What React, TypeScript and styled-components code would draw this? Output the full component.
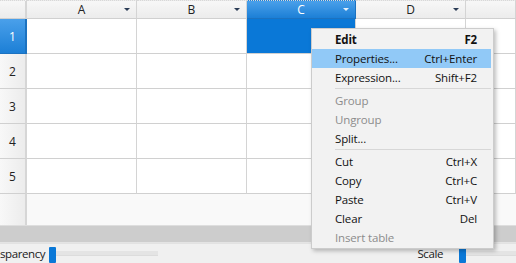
import { createGlobalStyle, styled } from 'styled-components';

const GlobalStyle = createGlobalStyle`
  html, body {
    margin: 0;
    padding: 0;
    width: 516px;
    height: 263px;
    overflow: hidden;
    background: #ffffff;
  }
  body {
    font-family: 'Open Sans', 'Noto Sans', 'DejaVu Sans', sans-serif;
    font-size: 12px;
    color: #1a1a1a;
  }
`;

const columns = ['A', 'B', 'C', 'D', ''];
const rows = [1, 2, 3, 4, 5];
const selectedCol = 'C';
const selectedRow = 1;

type MenuEntry =
  | { kind: 'item'; label: string; shortcut?: string; bold?: boolean; active?: boolean; disabled?: boolean }
  | { kind: 'sep' };

const menu: MenuEntry[] = [
  { kind: 'item', label: 'Edit', shortcut: 'F2', bold: true },
  { kind: 'item', label: 'Properties...', shortcut: 'Ctrl+Enter', active: true },
  { kind: 'item', label: 'Expression...', shortcut: 'Shift+F2' },
  { kind: 'sep' },
  { kind: 'item', label: 'Group', disabled: true },
  { kind: 'item', label: 'Ungroup', disabled: true },
  { kind: 'item', label: 'Split...' },
  { kind: 'sep' },
  { kind: 'item', label: 'Cut', shortcut: 'Ctrl+X' },
  { kind: 'item', label: 'Copy', shortcut: 'Ctrl+C' },
  { kind: 'item', label: 'Paste', shortcut: 'Ctrl+V' },
  { kind: 'item', label: 'Clear', shortcut: 'Del' },
  { kind: 'item', label: 'Insert table', disabled: true },
];

export default function App(): JSX.Element {
  return (
    <>
      <GlobalStyle />
      <Window>
        <SheetArea>
          <Grid>
            <Corner />
            {columns.map((c, i) => (
              <ColHeader key={`h${i}`} $selected={c === selectedCol}>
                <span>{c}</span>
                {i < 4 ? <Caret $selected={c === selectedCol} /> : null}
              </ColHeader>
            ))}
            {rows.map((r) => (
              <RowGroup key={r}>
                <RowHeader $selected={r === selectedRow}>{r}</RowHeader>
                {columns.map((c, i) => (
                  <Cell key={`${r}-${i}`} $selected={r === selectedRow && c === selectedCol} />
                ))}
              </RowGroup>
            ))}
          </Grid>
          <Filler>
            <FillerHeader />
          </Filler>
        </SheetArea>
        <ScrollBand />
        <StatusBar>
          {/* the window is cut at the left, only the tail of "Transparency" shows */}
          <StatusLabel $gap={4}>sparency</StatusLabel>
          <Thumb />
          <Track $width={102} />
          <Spacer />
          <StatusLabel $gap={16}>Scale</StatusLabel>
          <Thumb />
          <Track $width={50} />
        </StatusBar>

        <Menu>
          {menu.map((m, i) =>
            m.kind === 'sep' ? (
              <Separator key={i} />
            ) : (
              <MenuItem key={i} $active={m.active} $disabled={m.disabled} $bold={m.bold}>
                <span>{m.label}</span>
                {m.shortcut ? <span>{m.shortcut}</span> : null}
              </MenuItem>
            ),
          )}
        </Menu>
      </Window>
    </>
  );
}

const Window = styled.div`
  position: relative;
  width: 516px;
  height: 263px;
  display: flex;
  flex-direction: column;
  overflow: hidden;
`;

const SheetArea = styled.div`
  flex: 1;
  display: flex;
  flex-direction: column;
  background: #f9f9f9;
`;

const Grid = styled.div`
  display: grid;
  grid-template-columns: 27px 110px 110px 109px 110px 1fr;
  grid-template-rows: 19px repeat(5, 35px);
  background: #ffffff;
`;

const RowGroup = styled.div`
  display: contents;
`;

const headerBg = 'linear-gradient(#f7f7f7, #ececec)';
const selectedBg = 'linear-gradient(#4aa0ea, #1c7fd6)';

const Corner = styled.div`
  background: ${headerBg};
  border-right: 2px solid #d6d6d6;
  border-bottom: 1px solid #d0d0d0;
  border-top: 1px dotted #d8d8d8;
`;

const ColHeader = styled.div<{ $selected: boolean }>`
  position: relative;
  display: flex;
  align-items: center;
  justify-content: center;
  background: ${(p) => (p.$selected ? selectedBg : headerBg)};
  color: ${(p) => (p.$selected ? '#ffffff' : '#222222')};
  border-right: 1px solid ${(p) => (p.$selected ? '#1c72c0' : '#d4d4d4')};
  border-bottom: 1px solid ${(p) => (p.$selected ? '#1c72c0' : '#d0d0d0')};
  border-top: 1px dotted #d8d8d8;
  font-size: 12px;
  line-height: 1;
`;

const Caret = styled.i<{ $selected: boolean }>`
  position: absolute;
  right: 6px;
  top: 7px;
  width: 0;
  height: 0;
  border-left: 3px solid transparent;
  border-right: 3px solid transparent;
  border-top: 3px solid ${(p) => (p.$selected ? '#e6f1fb' : '#2a3b55')};
`;

const RowHeader = styled.div<{ $selected: boolean }>`
  display: flex;
  align-items: center;
  justify-content: center;
  background: ${(p) => (p.$selected ? selectedBg : 'linear-gradient(90deg, #f8f8f8, #ececec)')};
  color: ${(p) => (p.$selected ? '#ffffff' : '#222222')};
  border-right: 2px solid ${(p) => (p.$selected ? '#1c72c0' : '#d6d6d6')};
  border-bottom: 1px solid ${(p) => (p.$selected ? '#1c72c0' : '#d0d0d0')};
  font-size: 12px;
`;

const Cell = styled.div<{ $selected: boolean }>`
  background: ${(p) => (p.$selected ? '#0a78d7' : '#ffffff')};
  border-right: 1px solid #d4d4d4;
  border-bottom: 1px solid #d0d0d0;
`;

const Filler = styled.div`
  flex: 1;
  display: flex;
  background: #f9f9f9;
`;

const FillerHeader = styled.div`
  width: 25px;
  background: linear-gradient(90deg, #f8f8f8, #ececec);
  border-right: 2px solid #d6d6d6;
`;

const ScrollBand = styled.div`
  height: 16px;
  background: #cdcdcd;
  border-top: 1px solid #dedede;
  border-bottom: 1px solid #e4e4e4;
`;

const StatusBar = styled.div`
  height: 19px;
  display: flex;
  align-items: flex-end;
  background: #f0f0f0;
  border-top: 1px solid #e2e2e2;
  font-size: 11.5px;
  letter-spacing: -0.4px;
  color: #1a1a1a;
`;

const StatusLabel = styled.span<{ $gap: number }>`
  height: 19px;
  display: flex;
  align-items: center;
  white-space: nowrap;
  margin-right: ${(p) => p.$gap}px;
`;

const Thumb = styled.div`
  width: 7px;
  height: 16px;
  flex-shrink: 0;
  background: #0a78d7;
  border-radius: 1px;
`;

const Track = styled.div<{ $width: number }>`
  width: ${(p) => p.$width}px;
  height: 4px;
  margin-bottom: 7px;
  background: #e4e4e4;
  border-bottom: 1px solid #dcdcdc;
`;

const Spacer = styled.div`
  flex: 1;
`;

const Menu = styled.div`
  position: absolute;
  left: 311px;
  top: 28px;
  width: 179px;
  padding: 1px 2px 1px 0;
  background: #f2f2f2;
  border: 1px solid #cccccc;
  box-shadow: 2px 2px 4px rgba(0, 0, 0, 0.25);
  display: flex;
  flex-direction: column;
`;

const MenuItem = styled.div<{ $active?: boolean; $disabled?: boolean; $bold?: boolean }>`
  height: 19px;
  display: flex;
  align-items: center;
  justify-content: space-between;
  padding: 0 14px 0 23px;
  background: ${(p) => (p.$active ? '#91c9f7' : 'transparent')};
  color: ${(p) => (p.$disabled ? '#8c8c8c' : '#111111')};
  font-weight: ${(p) => (p.$bold ? 700 : 400)};
  font-size: 11.5px;
  letter-spacing: -0.15px;
  white-space: nowrap;
`;

const Separator = styled.div`
  height: 1px;
  margin: 1px 0 2px 23px;
  background: #d7d7d7;
`;
